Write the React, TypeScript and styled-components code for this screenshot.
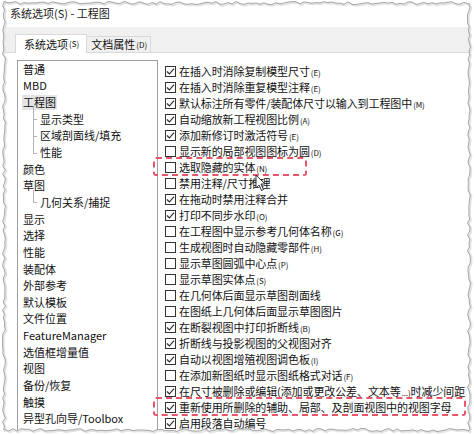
import styled, { createGlobalStyle } from "styled-components";

const GlobalStyle = createGlobalStyle`
  html, body {
    margin: 0;
    padding: 0;
    background: #ffffff;
  }
`;

type TreeItem = { label: string; child?: boolean; selected?: boolean; last?: boolean };

const treeItems: TreeItem[] = [
  { label: "普通" },
  { label: "MBD" },
  { label: "工程图", selected: true },
  { label: "显示类型", child: true },
  { label: "区域剖面线/填充", child: true },
  { label: "性能", child: true, last: true },
  { label: "颜色" },
  { label: "草图" },
  { label: "几何关系/捕捉", child: true, last: true },
  { label: "显示" },
  { label: "选择" },
  { label: "性能" },
  { label: "装配体" },
  { label: "外部参考" },
  { label: "默认模板" },
  { label: "文件位置" },
  { label: "FeatureManager" },
  { label: "选值框增量值" },
  { label: "视图" },
  { label: "备份/恢复" },
  { label: "触摸" },
  { label: "异型孔向导/Toolbox" },
];

type Option = { text: string; key?: string; tail?: string; checked: boolean; mark?: number };

const options: Option[] = [
  { text: "在插入时消除复制模型尺寸", key: "(E)", checked: true },
  { text: "在插入时消除重复模型注释", key: "(E)", checked: true },
  { text: "默认标注所有零件/装配体尺寸以输入到工程图中", key: "(M)", checked: true },
  { text: "自动缩放新工程视图比例", key: "(A)", checked: true },
  { text: "添加新修订时激活符号", key: "(E)", checked: true },
  { text: "显示新的局部视图图标为圆", key: "(D)", checked: false },
  { text: "选取隐藏的实体", key: "(N)", checked: false, mark: 154 },
  { text: "禁用注释/尺寸推理", checked: false },
  { text: "在拖动时禁用注释合并", checked: true },
  { text: "打印不同步水印", key: "(O)", checked: true },
  { text: "在工程图中显示参考几何体名称", key: "(G)", checked: false },
  { text: "生成视图时自动隐藏零部件", key: "(H)", checked: false },
  { text: "显示草图圆弧中心点", key: "(P)", checked: false },
  { text: "显示草图实体点", key: "(S)", checked: false },
  { text: "在几何体后面显示草图剖面线", checked: false },
  { text: "在图纸上几何体后面显示草图图片", checked: false },
  { text: "在断裂视图中打印折断线", key: "(B)", checked: true },
  { text: "折断线与投影视图的父视图对齐", checked: true },
  { text: "自动以视图增殖视图调色板", key: "(I)", checked: true },
  { text: "在添加新图纸时显示图纸格式对话", key: "(F)", checked: false },
  { text: "在尺寸被删除或编辑(添加或更改公差、文本等", key: "...)", tail: "时减少间距", checked: true },
  { text: "重新使用所删除的辅助、局部、及剖面视图中的视图字母", checked: true, mark: 313 },
  { text: "启用段落自动编号", checked: true },
];

const Page = styled.div`
  position: relative;
  width: 474px;
  height: 434px;
  overflow: hidden;
  background: #ffffff;
  font-family: "Noto Sans CJK SC", "Noto Sans", sans-serif;
  font-size: 11px;
  color: #111;
`;

const TitleBar = styled.div`
  height: 27px;
  display: flex;
  align-items: center;
  padding-left: 10px;
  font-size: 11px;
  line-height: 1;
  color: #1a1a1a;
`;

const TabStrip = styled.div`
  height: 26px;
  background: #f0f0f0;
  border-bottom: 1px solid #d9d9d9;
  display: flex;
  align-items: flex-end;
  padding-left: 15px;
  box-sizing: border-box;
`;

const Tab = styled.div<{ $active?: boolean }>`
  height: ${(p) => (p.$active ? 18 : 15)}px;
  padding: 0 ${(p) => (p.$active ? 7 : 3)}px 0 ${(p) => (p.$active ? 8 : 4)}px;
  display: flex;
  align-items: center;
  background: ${(p) => (p.$active ? "#ffffff" : "#f0f0f0")};
  border: 1px solid #d9d9d9;
  border-bottom: none;
  margin-bottom: ${(p) => (p.$active ? -1 : 0)}px;
  border-left-width: ${(p) => (p.$active ? 1 : 0)}px;
  line-height: 1;
  font-size: 11px;
  color: #111;
`;

const Key = styled.span`
  font-size: 8px;
  margin-left: 1px;
  color: #111;
`;

const Body = styled.div`
  display: flex;
  padding: 7px 0 0 17px;
`;

const Tree = styled.div`
  width: 139px;
  height: 400px;
  border: 1px solid #a0a0a0;
  box-sizing: content-box;
`;

const TreeRow = styled.div<{ $child?: boolean; $last?: boolean }>`
  position: relative;
  height: 16.65px;
  display: flex;
  align-items: center;
  padding-left: ${(p) => (p.$child ? 21 : 4)}px;
  white-space: nowrap;

  ${(p) =>
    p.$child &&
    `
    &::before {
      content: "";
      position: absolute;
      left: 15px;
      top: -4px;
      height: ${p.$last ? "12.3px" : "16.65px"};
      border-left: 1px solid #b4b4b4;
    }
    &::after {
      content: "";
      position: absolute;
      left: 15px;
      top: 8.3px;
      width: 4px;
      border-top: 1px solid #b4b4b4;
    }
  `}
`;

const TreeLabel = styled.span<{ $selected?: boolean }>`
  padding: 2px 1px;
  background: ${(p) => (p.$selected ? "#e5e5e5" : "transparent")};
  line-height: 1;
`;

const List = styled.div`
  padding: 3px 0 0 7px;
`;

const Row = styled.div<{ $mark?: number }>`
  position: relative;
  height: 16px;
  display: flex;
  align-items: center;
  gap: 3px;
  white-space: nowrap;

  ${(p) =>
    p.$mark
      ? `
    &::after {
      content: "";
      position: absolute;
      left: -12px;
      top: -2px;
      width: ${p.$mark}px;
      height: 19px;
      border: 2px dashed #e8556a;
      border-radius: 3px;
      box-sizing: border-box;
    }
  `
      : ""}
`;

const Box = styled.span`
  width: 11px;
  height: 11px;
  border: 1px solid #333;
  box-sizing: border-box;
  background: #fff;
  display: flex;
  align-items: center;
  justify-content: center;
  flex: none;
`;

const RowText = styled.span`
  line-height: 1;
  letter-spacing: -0.1px;
`;

const Cursor = styled.svg`
  position: absolute;
  left: 255px;
  top: 174px;
  pointer-events: none;
`;

const Overlay = styled.svg`
  position: absolute;
  left: 0;
  top: 0;
  pointer-events: none;
`;

const tornPath = (): string => {
  let seed = 11;
  const rnd = () => {
    seed = (seed * 16807) % 2147483647;
    return seed / 2147483647 - 0.5;
  };
  const L = 4;
  const T = 3;
  const R = 469;
  const B = 430;
  const pts: string[] = [];
  for (let x = L; x < R; x += 4) pts.push(`${x},${(T + rnd() * 3).toFixed(1)}`);
  for (let y = T; y < B; y += 4) pts.push(`${(R + rnd() * 3).toFixed(1)},${y}`);
  for (let x = R; x > L; x -= 4) pts.push(`${x},${(B + rnd() * 3).toFixed(1)}`);
  for (let y = B; y > T; y -= 4) pts.push(`${(L + rnd() * 3).toFixed(1)},${y}`);
  return "M" + pts.join("L") + "Z";
};

const Check = () => (
  <svg width="9" height="9" viewBox="0 0 9 9">
    <polyline points="1,4.5 3.4,7 8,1.6" fill="none" stroke="#222" strokeWidth="1.1" />
  </svg>
);

export default function App() {
  const torn = tornPath();
  return (
    <Page>
      <GlobalStyle />
      <TitleBar>系统选项(S) - 工程图</TitleBar>
      <TabStrip>
        <Tab $active>
          系统选项<Key>(S)</Key>
        </Tab>
        <Tab>
          文档属性<Key>(D)</Key>
        </Tab>
      </TabStrip>
      <Body>
        <Tree>
          {treeItems.map((t, i) => (
            <TreeRow key={i} $child={t.child} $last={t.last}>
              <TreeLabel $selected={t.selected}>{t.label}</TreeLabel>
            </TreeRow>
          ))}
        </Tree>
        <List>
          {options.map((o, i) => (
            <Row key={i} $mark={o.mark}>
              <Box>{o.checked && <Check />}</Box>
              <RowText>
                {o.text}
                {o.key && <Key>{o.key}</Key>}
                {o.tail}
              </RowText>
            </Row>
          ))}
        </List>
      </Body>
      <Cursor width="11" height="18" viewBox="0 0 11 18">
        <path d="M1 1 L1 14 L4 11 L6.5 16.5 L8.5 15.5 L6 10 L10 10 Z" fill="#fff" stroke="#333" strokeWidth="1" />
      </Cursor>
      <Overlay width="474" height="434" viewBox="0 0 474 434">
        <path d={`M0 0H474V434H0Z ${torn}`} fill="#ffffff" fillRule="evenodd" />
        <path d={torn} fill="none" stroke="#e4e4e4" strokeWidth="2" transform="translate(1.2,1.2)" />
        <path d={torn} fill="none" stroke="#a6a6a6" strokeWidth="1" />
      </Overlay>
    </Page>
  );
}
